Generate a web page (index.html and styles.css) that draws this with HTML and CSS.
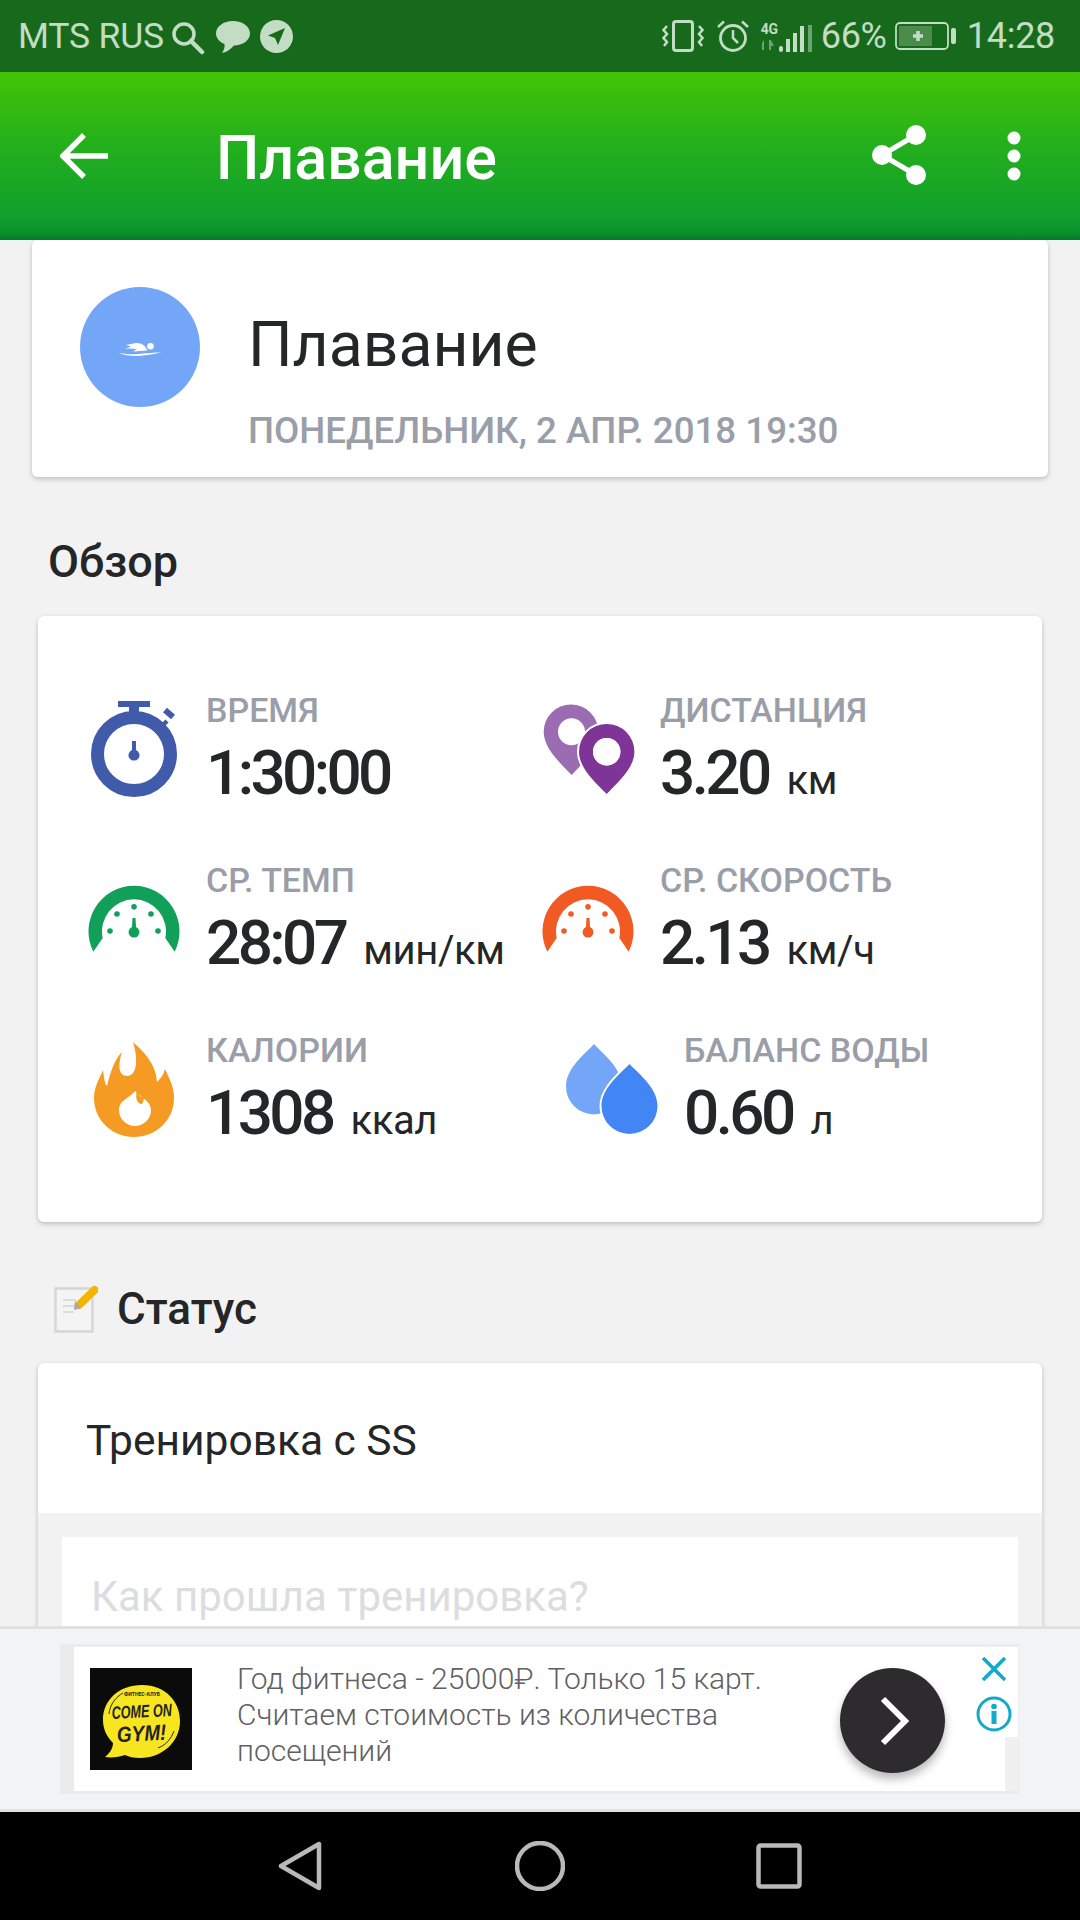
FILE: index.html
```html
<!DOCTYPE html>
<html lang="ru">
<head>
<meta charset="utf-8">
<title>Плавание</title>
<link rel="stylesheet" href="styles.css">
</head>
<body>
<div class="screen">
  <div class="statusbar">
    <span class="carrier">MTS RUS</span>
    <svg class="si si-search" viewBox="0 0 34 34"><circle cx="13" cy="13" r="10" class="ln" stroke-width="3.5"/><path d="M20 20l11 11" class="ln" stroke-width="4.5" stroke-linecap="round"/></svg>
    <svg class="si si-bubble" viewBox="0 0 34 32"><path class="fl" d="M17 0C26.500 0 34 5.500 34 12.500C34 19.500 26.500 24.500 18 24.500C15 28 11 31 6 32C8 29 9 26 8.500 23C3.500 21 0 17 0 12.500C0 5.500 7.500 0 17 0Z"/></svg>
    <svg class="si si-send" viewBox="0 0 33 33"><circle class="fl" cx="16.500" cy="16.500" r="16.500"/><path d="M25 8L8 15.500L15 18L18 25Z" fill="#176a1c"/></svg>
    <span class="spacer"></span>
    <svg class="si si-vib" viewBox="0 0 42 32"><rect class="ln" x="11.500" y="1.500" width="19" height="29" rx="2.500" stroke-width="3"/><path class="ln" stroke-width="2.500" d="M5 6L1.500 10L5 14L1.500 18L5 22L2 26M37 6L40.500 10L37 14L40.500 18L37 22L40 26"/></svg>
    <svg class="si si-alarm" viewBox="0 0 34 34"><circle class="ln" cx="17" cy="19" r="12.500" stroke-width="2.800"/><path class="ln" stroke-width="2.500" d="M17 11V19L22 24M2 8L8 2.500M32 8L26 2.500"/></svg>
    <span class="net">
      <span class="net-g">4G</span>
      <svg class="si-net" viewBox="0 0 16 10"><path class="fl dim" d="M3 0V10H1V3ZM8 10V0H10L13 6H10V10Z"/></svg>
    </span>
    <svg class="si si-sig" viewBox="0 0 34 27"><rect class="fl" x="0" y="21" width="4" height="6" rx="2"/><rect class="fl" x="7" y="14" width="4" height="13"/><rect class="fl" x="14" y="8" width="4" height="19"/><rect class="fl" x="21" y="1" width="4" height="26"/><rect class="fl dim" x="29" y="0" width="4" height="27"/></svg>
    <span class="pct">66%</span>
    <svg class="si si-bat" viewBox="0 0 62 28"><rect x="1" y="1" width="52" height="26" rx="4" class="ln" stroke-width="1.800"/><rect x="4" y="4" width="33" height="20" class="fl dim2"/><path d="M23 9V19M18 14H28" class="ln" stroke-width="3.500"/><rect x="56" y="6" width="5" height="16" rx="2" class="fl"/></svg>
    <span class="time">14:28</span>
  </div>

  <header class="toolbar">
    <svg class="ti ti-back" viewBox="0 0 50 46"><path d="M48 23H4M24 2L3 23L24 44" fill="none" stroke="#fff" stroke-width="5.500"/></svg>
    <h1 class="tb-title">Плавание</h1>
    <svg class="ti ti-share" viewBox="0 0 54 60"><path d="M44 10L10 30L44 50" fill="none" stroke="#fff" stroke-width="5"/><circle cx="44" cy="10" r="10" fill="#fff"/><circle cx="10" cy="30" r="10" fill="#fff"/><circle cx="44" cy="50" r="10" fill="#fff"/></svg>
    <svg class="ti ti-more" viewBox="0 0 14 50"><circle cx="7" cy="7" r="6.500" fill="#fff"/><circle cx="7" cy="25" r="6.500" fill="#fff"/><circle cx="7" cy="43" r="6.500" fill="#fff"/></svg>
  </header>

  <main class="content">
    <section class="card card-top">
      <div class="avatar">
        <svg class="swimmer" viewBox="0 0 42 14"><path d="M7 2L17 0C21 0 24 1 26 3.500L28.500 7.500L14 8.500L18 6L10 5.500L6 6L12 3.500Z" fill="#fff"/><circle cx="31.500" cy="3.300" r="3.300" fill="#fff"/><path d="M0 10C8 11.500 14 11.500 20 11C28 10 36 9.500 42 9.500C36 11 28 12 20 13C12 13.500 5 12 0 10Z" fill="#fff"/></svg>
      </div>
      <div class="top-body">
        <div class="top-title">Плавание</div>
        <div class="top-date">ПОНЕДЕЛЬНИК, 2 АПР. 2018 19:30</div>
      </div>
    </section>

    <h2 class="heading heading-overview">Обзор</h2>

    <section class="card card-stats">
      <div class="stat">
        <svg class="stat-icon" viewBox="0 0 100 120">
          <g fill="#3f5ba9">
            <path d="M34 11H66V17H55V25H45V17H34Z"/>
            <path d="M48 51H52V60A5.500 5.500 0 1 1 48 60Z"/>
          </g>
          <g fill="none" stroke="#3f5ba9">
            <circle cx="50" cy="64" r="36.500" stroke-width="13"/>
            <path stroke-width="4.500" d="M78 36L83 31"/>
            <path stroke-width="6" d="M81 20L89 27"/>
          </g>
        </svg>
        <div class="stat-text"><div class="stat-label">ВРЕМЯ</div><div class="stat-value"><b>1:30:00</b></div></div>
      </div>
      <div class="stat">
        <svg class="stat-icon" viewBox="0 0 100 120">
          <path fill="#9c6cb2" fill-rule="evenodd" d="M5.700 41.700A27.300 27.300 0 1 1 60.300 41.700C60.300 58 45 73 33.700 85C22 73 5.700 58 5.700 41.700ZM20 41.700A13.500 13.500 0 1 0 47 41.700A13.500 13.500 0 1 0 20 41.700Z"/>
          <path fill="#7f3598" fill-rule="evenodd" stroke="#fff" stroke-width="4" paint-order="stroke" d="M41 61.700A27.700 27.700 0 1 1 96.400 61.700C96.400 78 80 92 68.700 104C57 92 41 78 41 61.700ZM55 61.700A13.700 13.700 0 1 0 82.400 61.700A13.700 13.700 0 1 0 55 61.700Z"/>
          <circle cx="68.700" cy="61.700" r="13.700" fill="#fff"/>
        </svg>
        <div class="stat-text"><div class="stat-label">ДИСТАНЦИЯ</div><div class="stat-value"><b>3.20</b><span class="unit">км</span></div></div>
      </div>
      <div class="stat">
        <svg class="stat-icon" viewBox="0 0 100 120">
          <g fill="#10a05a">
            <path d="M9.300 91.700A45.500 45.500 0 1 1 90.700 91.700L81.300 78A32 32 0 1 0 18.700 78Z"/>
            <circle cx="50" cy="46.700" r="2.800"/><circle cx="33" cy="54" r="2.800"/><circle cx="67" cy="54" r="2.800"/><circle cx="26" cy="71" r="2.800"/><circle cx="74" cy="71" r="2.800"/>
            <path d="M48.500 58H51.500L52 67A5.500 5.500 0 1 1 48 67Z"/>
          </g>
        </svg>
        <div class="stat-text"><div class="stat-label">СР. ТЕМП</div><div class="stat-value"><b>28:07</b><span class="unit">мин/км</span></div></div>
      </div>
      <div class="stat">
        <svg class="stat-icon" viewBox="0 0 100 120">
          <g fill="#f15a22">
            <path d="M9.300 91.700A45.500 45.500 0 1 1 90.700 91.700L81.300 78A32 32 0 1 0 18.700 78Z"/>
            <circle cx="50" cy="46.700" r="2.800"/><circle cx="33" cy="54" r="2.800"/><circle cx="67" cy="54" r="2.800"/><circle cx="26" cy="71" r="2.800"/><circle cx="74" cy="71" r="2.800"/>
            <path d="M48.500 58H51.500L52 67A5.500 5.500 0 1 1 48 67Z"/>
          </g>
        </svg>
        <div class="stat-text"><div class="stat-label">СР. СКОРОСТЬ</div><div class="stat-value"><b>2.13</b><span class="unit">км/ч</span></div></div>
      </div>
      <div class="stat">
        <svg class="stat-icon" viewBox="0 0 100 120">
          <path fill="#f59a23" d="M49 12C60 22 72 34 73 52C77 48 80 44 81 39C85 48 90 56 90 68C90 90 72 107 50 107C28 107 10 90 10 68C10 56 16 48 19 40C20 46 20 52 23 56C26 44 30 30 38 22C34 34 34 46 43 46C52 46 55 32 49 12Z"/>
          <path fill="#fff" d="M51 61C54 66 67 70 67 80A16 16 0 0 1 35 80C35 70 46 68 51 61Z"/>
          <path fill="#f59a23" d="M53 61C51 68 53 74 58 74C60 71 60 67 60 66C58 68 55 67 53 61Z"/>
        </svg>
        <div class="stat-text"><div class="stat-label">КАЛОРИИ</div><div class="stat-value"><b>1308</b><span class="unit">ккал</span></div></div>
      </div>
      <div class="stat stat-water">
        <svg class="stat-icon" viewBox="0 0 100 120">
          <path fill="#74a6f8" d="M31 14C40 24 59 38 59 56.500A28 28 0 0 1 3 56.500C3 38 22 24 31 14Z"/>
          <path fill="#4285f4" stroke="#fff" stroke-width="4" paint-order="stroke" d="M66.500 34C76 44 94.500 58 94.500 76A28 28 0 0 1 38.500 76C38.500 58 57 44 66.500 34Z"/>
        </svg>
        <div class="stat-text"><div class="stat-label">БАЛАНС ВОДЫ</div><div class="stat-value"><b>0.60</b><span class="unit">л</span></div></div>
      </div>
    </section>

    <h2 class="heading heading-status">
      <svg class="note-icon" viewBox="0 0 44 48">
        <rect x="1.500" y="3.500" width="37" height="43" fill="#f4f4f4" stroke="#d6d6d6" stroke-width="2.500"/>
        <path d="M9 15H22M9 21H22M9 27H20" stroke="#dcdcdc" stroke-width="2"/>
        <path d="M40.500 5L25 20" stroke="#f5b400" stroke-width="8" stroke-linecap="round"/>
        <path d="M21 16L27 23L20 25Z" fill="#a9a9a9"/>
      </svg>
      Статус
    </h2>

    <section class="card card-status">
      <div class="status-text">Тренировка с SS</div>
      <div class="status-edit">
        <div class="status-input">Как прошла тренировка?</div>
      </div>
    </section>
  </main>

  <aside class="adbar">
    <div class="ad">
      <svg class="ad-logo" viewBox="0 0 102 102">
        <rect width="102" height="102" fill="#0b0b0b"/>
        <path d="M52 17C76 17 90 34 90 53C90 74 72 90 50 90C44 90 39 89 35 87C29 89 22 90 15 89C20 85 23 80 23 75C16 68 13 60 13 52C13 32 29 17 52 17Z" fill="#f7e61f"/>
        <path d="M19 46C20 36 26 29 33 25M68 80C76 77 81 71 84 63" fill="none" stroke="#2a2a2a" stroke-width="1"/>
        <text class="lg-s" transform="translate(52 28) scale(.85 1)">ФИТНЕС-КЛУБ</text>
        <text class="lg-a" transform="translate(52 49.500) rotate(-3) scale(.7 1)">COME ON</text>
        <text class="lg-b" transform="translate(52 73) rotate(-3) scale(.86 1)">GYM!</text>
      </svg>
      <p class="ad-text">Год фитнеса - 25000₽. Только 15 карт.<br>Считаем стоимость из количества<br>посещений</p>
      <div class="ad-go">
        <svg class="ad-chev" viewBox="0 0 30 50"><path d="M3 3L25 25L3 47" fill="none" stroke="#fff" stroke-width="6"/></svg>
      </div>
      <div class="ad-side">
        <svg class="ad-x" viewBox="0 0 26 26"><path d="M2 2L24 24M24 2L2 24" fill="none" stroke="#12aac8" stroke-width="3.500"/></svg>
        <svg class="ad-i" viewBox="0 0 36 36"><circle cx="18" cy="18" r="16" fill="none" stroke="#12aac8" stroke-width="3"/><rect x="15.500" y="15" width="5" height="13" fill="#12aac8"/><circle cx="18" cy="10.500" r="2.800" fill="#12aac8"/></svg>
      </div>
    </div>
  </aside>

  <nav class="navbar">
    <svg class="nv nv-back" viewBox="0 0 44 50"><path d="M41 3V47L3 25Z" fill="none" stroke="#b9b9b9" stroke-width="4.500" stroke-linejoin="round"/></svg>
    <svg class="nv nv-home" viewBox="0 0 50 50"><circle cx="25" cy="25" r="23" fill="none" stroke="#b9b9b9" stroke-width="4.500"/></svg>
    <svg class="nv nv-recent" viewBox="0 0 46 46"><rect x="2.500" y="2.500" width="41" height="41" rx="2" fill="none" stroke="#b9b9b9" stroke-width="4.500"/></svg>
  </nav>
</div>
</body>
</html>
```
FILE: styles.css
```css
* { box-sizing: border-box; }
html, body { margin: 0; padding: 0; }
body { font-family: Roboto, "Noto Sans", sans-serif; background: #f2f2f2; color: #242627; }
.screen { width: 1080px; height: 1920px; display: flex; flex-direction: column; overflow: hidden; background: #f2f2f2; }

.statusbar { height: 72px; flex: none; display: flex; align-items: center; background: #176a1b; color: #c3dcc4; font-size: 36px; padding: 0 25px 0 18px; }
.carrier { width: 153px; font-size: 35.500px; letter-spacing: -.2px; white-space: nowrap; }
.spacer { flex: 1; }
.si { display: block; flex: none; }
.ln { fill: none; stroke: #c3dcc4; }
.fl { fill: #c3dcc4; }
.dim { opacity: .5; }
.dim2 { opacity: .3; }
.si-search { width: 34px; height: 34px; margin-top: 3px; }
.si-bubble { width: 34px; height: 32px; margin-left: 11px; margin-top: 2px; }
.si-send { width: 33px; height: 33px; margin-left: 10px; }
.si-vib { width: 42px; height: 32px; }
.si-alarm { width: 34px; height: 34px; margin-left: 12px; }
.net { width: 18px; margin-left: 11px; display: flex; flex-direction: column; align-items: flex-start; }
.net-g { font-size: 14px; line-height: 15px; font-weight: 700; letter-spacing: -.5px; }
.si-net { width: 16px; height: 10px; display: block; margin-top: 3px; }
.si-sig { width: 34px; height: 27px; margin-top: 5px; margin-right: 8px; }
.pct { letter-spacing: -.4px; width: 74px; }
.si-bat { width: 62px; height: 28px; }
.time { margin-left: 10px; letter-spacing: -.3px; }

.toolbar { height: 168px; flex: none; display: flex; align-items: center; color: #fff; background: linear-gradient(180deg, #43c506 0%, #23af1d 45%, #0e9f2e 88%, #0a8f2d 96%, #067a2c 100%); padding: 0 59px 0 60px; }
.ti { display: block; flex: none; }
.ti-back { width: 50px; height: 46px; }
.tb-title { margin: 4px 0 0 106px; flex: 1; font-size: 61px; font-weight: 500; line-height: 1; }
.ti-share { width: 54px; height: 60px; margin-right: 81px; margin-top: -2px; }
.ti-more { width: 14px; height: 50px; }

.content { flex: 1; min-height: 0; overflow: hidden; }
.card { background: #fff; border-radius: 6px; box-shadow: 0 2px 5px rgba(0,0,0,.22); }
.card-top { margin: 0 32px; height: 237px; display: flex; padding: 47px 0 0 48px; }
.avatar { width: 120px; height: 120px; flex: none; border-radius: 50%; background: #74a6f8; display: flex; align-items: center; justify-content: center; }
.swimmer { width: 42px; height: 14px; display: block; margin-top: 5px; }
.top-body { margin-left: 48px; padding-top: 18px; }
.top-title { font-size: 62.500px; line-height: 80px; }
.top-date { font-size: 36.700px; line-height: 40px; margin-top: 26px; font-weight: 500; color: #9a9ea9; white-space: nowrap; }

.heading { margin: 0; font-size: 45px; font-weight: 500; display: flex; align-items: center; }
.heading-overview { height: 139px; padding: 30px 0 0 48px; }
.heading-status { height: 141px; padding: 32px 0 0 54px; font-size: 44px; }
.note-icon { width: 44px; height: 48px; display: block; margin-right: 19px; }

.card-stats { margin: 0 38px; height: 606px; padding: 74px 0 0 46px; display: grid; grid-template-columns: 454px 1fr; grid-auto-rows: 120px; row-gap: 50px; }
.stat { display: flex; }
.stat-water { margin-left: 25px; }
.stat-water .stat-text { margin-left: 21px; }
.stat-icon { width: 100px; height: 120px; flex: none; display: block; }
.stat-text { margin-left: 22px; }
.stat-label { font-size: 34px; line-height: 40px; font-weight: 500; color: #9a9ea9; white-space: nowrap; }
.stat-value { margin-top: 6px; line-height: 74px; white-space: nowrap; }
.stat-value b { font-size: 62px; font-weight: 500; letter-spacing: -3.600px; }
.unit { font-size: 40px; margin-left: 18px; letter-spacing: -.4px; }

.card-status { margin: 0 38px; height: 420px; overflow: hidden; }
.status-text { height: 150px; padding: 4px 0 0 48px; display: flex; align-items: center; font-size: 42.500px; }
.status-edit { background: #f2f2f2; padding: 24px 24px 0; height: 270px; }
.status-input { background: #fff; height: 246px; padding: 36px 0 0 29px; font-size: 42px; line-height: 48px; color: #dcdde0; white-space: nowrap; }

.adbar { height: 186px; flex: none; background: #f1f3f4; border-top: 3px solid #dfe1e2; border-bottom: 3px solid #dfe1e2; padding: 15px 0 0 60px; }
.ad { width: 959px; height: 150px; background: #fff; border: 3px solid #e9ebec; border-left-width: 14px; border-right-width: 1px; display: flex; position: relative; padding: 21px 0 0 16px; }
.ad::after { content: ""; position: absolute; right: 0; bottom: 0; width: 13px; height: 54px; background: #f0f0f0; }
.ad-logo { width: 102px; height: 102px; display: block; flex: none; }
.lg-s { font: 700 6px Roboto, sans-serif; fill: #222; text-anchor: middle; }
.lg-a { font: italic 700 18px "Liberation Sans", sans-serif; fill: #222; text-anchor: middle; }
.lg-b { font: italic 700 22px "Liberation Sans", sans-serif; fill: #222; text-anchor: middle; }
.ad-text { margin: -7px 0 0 45px; flex: none; width: 603px; font-size: 30px; line-height: 36px; font-weight: 300; color: #5f6063; white-space: nowrap; }
.ad-go { width: 105px; height: 105px; flex: none; border-radius: 50%; background: #2d2b2e; box-shadow: 0 6px 10px rgba(0,0,0,.28); display: flex; align-items: center; justify-content: center; padding-left: 5px; }
.ad-chev { width: 30px; height: 50px; display: block; }
.ad-side { position: absolute; right: 6px; top: 9px; width: 36px; display: flex; flex-direction: column; align-items: center; }
.ad-x { width: 26px; height: 26px; display: block; }
.ad-i { width: 36px; height: 36px; display: block; margin-top: 14px; }

.navbar { height: 108px; flex: none; background: #000; display: flex; align-items: center; padding-left: 278px; }
.nv { display: block; flex: none; }
.nv-back { width: 44px; height: 50px; }
.nv-home { width: 50px; height: 50px; margin-left: 193px; }
.nv-recent { width: 46px; height: 46px; margin-left: 191px; }
```
